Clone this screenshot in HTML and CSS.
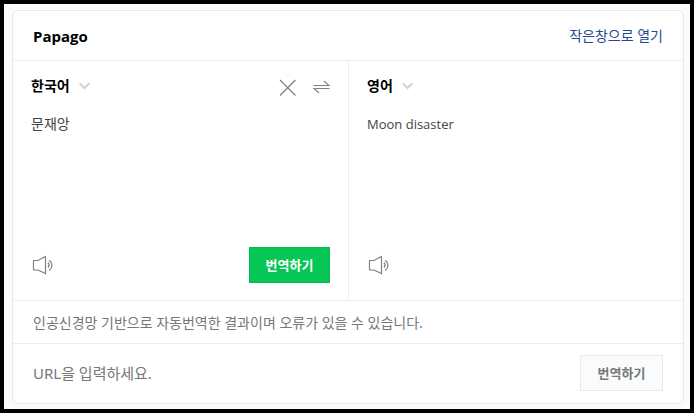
FILE: index.html
```
<!DOCTYPE html>
<html lang="ko">
<head>
  <meta charset="utf-8">
  <meta name="viewport" content="width=device-width, initial-scale=1">
  <title>Papago</title>
  <link rel="stylesheet" href="styles.css">
</head>
<body>
  <main class="translator">
    <header class="header">
      <h1>Papago</h1>
      <a href="#popup" class="popup-link">작은창으로 열기</a>
    </header>

    <div class="panes">
      <section class="pane">
        <div class="pane-top">
          <div class="language">
            <select aria-label="입력 언어">
              <option>한국어</option>
            </select>
            <svg class="chevron" width="11" height="8" viewBox="0 0 11 8" fill="none" stroke="currentColor" stroke-width="2">
              <path d="M0.7 1.2L5.5 6L10.3 1.2"/>
            </svg>
          </div>
          <div class="tools">
            <button type="button" class="icon-button" aria-label="지우기">
              <svg width="18" height="18" viewBox="0 0 18 18" fill="none" stroke="currentColor" stroke-width="1.2">
                <path d="M2 1L17.5 16.5M17.5 1L2 16.5"/>
              </svg>
            </button>
            <button type="button" class="icon-button" aria-label="언어 바꾸기">
              <svg width="18" height="18" viewBox="0 0 18 18" fill="none" stroke="currentColor" stroke-width="1.1">
                <path d="M1.5 6.5H17L12 2M17.5 9.5H2L7 14"/>
              </svg>
            </button>
          </div>
        </div>
        <textarea class="text" aria-label="번역할 내용" spellcheck="false">문재앙</textarea>
        <div class="pane-bottom">
          <button type="button" class="icon-button" aria-label="원문 듣기">
            <svg width="24" height="20" viewBox="0 0 24 20" fill="none" stroke="currentColor" stroke-width="1.2">
              <path d="M2.5 5.5H7L14.5 1.5V18.5L7 15H2.5Z"/>
              <path d="M17 7.5Q19.2 10 17 12.5M18.2 5.2Q24 10 18.2 15.5"/>
            </svg>
          </button>
          <button type="button" class="button button-green">번역하기</button>
        </div>
      </section>

      <section class="pane">
        <div class="pane-top">
          <div class="language">
            <select aria-label="번역 언어">
              <option>영어</option>
            </select>
            <svg class="chevron" width="11" height="8" viewBox="0 0 11 8" fill="none" stroke="currentColor" stroke-width="2">
              <path d="M0.7 1.2L5.5 6L10.3 1.2"/>
            </svg>
          </div>
        </div>
        <p class="text text-result">Moon disaster</p>
        <div class="pane-bottom">
          <button type="button" class="icon-button" aria-label="번역 듣기">
            <svg width="24" height="20" viewBox="0 0 24 20" fill="none" stroke="currentColor" stroke-width="1.2">
              <path d="M2.5 5.5H7L14.5 1.5V18.5L7 15H2.5Z"/>
              <path d="M17 7.5Q19.2 10 17 12.5M18.2 5.2Q24 10 18.2 15.5"/>
            </svg>
          </button>
        </div>
      </section>
    </div>

    <p class="notice">인공신경망 기반으로 자동번역한 결과이며 오류가 있을 수 있습니다.</p>

    <form class="url-form">
      <input type="text" placeholder="URL을 입력하세요." aria-label="URL">
      <button type="button" class="button button-gray">번역하기</button>
    </form>
  </main>
</body>
</html>
```
FILE: styles.css
```
* {
  margin: 0;
  padding: 0;
  box-sizing: border-box;
}

body {
  min-height: 100vh;
  padding: 6px 6px 5px 8px;
  border: 4px solid #000;
  background: #fafbfc;
  color: #444;
  font-family: "Noto Sans", "Noto Sans CJK KR", sans-serif;
  font-size: 14px;
  line-height: 20px;
}

button,
input,
select,
textarea {
  border: none;
  background: none;
  color: inherit;
  font: inherit;
}

.translator {
  border: 1px solid #e6eaec;
  border-radius: 6px;
  background: #fff;
}

.header {
  display: flex;
  justify-content: space-between;
  align-items: center;
  height: 50px;
  padding: 0 20px;
  border-bottom: 1px solid #ebedee;
}

.header h1 {
  color: #000;
  font-family: "Open Sans", sans-serif;
  font-size: 15px;
  font-weight: 700;
}

.popup-link {
  color: #1e4a94;
  text-decoration: none;
}

.panes {
  display: grid;
  grid-template-columns: 1fr 1fr;
  min-height: 240px;
  border-bottom: 1px solid #ebedee;
}

.pane {
  display: flex;
  flex-direction: column;
  padding: 13px 18px 17px;
}

.pane + .pane {
  border-left: 1px solid #ededed;
}

.pane-top,
.pane-bottom {
  display: flex;
  justify-content: space-between;
  align-items: center;
}

.pane-top {
  height: 24px;
}

.pane-bottom {
  height: 36px;
}

.language {
  display: flex;
  align-items: center;
  gap: 9px;
}

.language select {
  appearance: none;
  color: #000;
  font-weight: 700;
}

.chevron {
  color: #d2d2d2;
}

.tools {
  display: flex;
  gap: 16px;
  padding-top: 4px;
}

.icon-button {
  display: flex;
  color: #808080;
  cursor: pointer;
}

.text {
  display: block;
  flex: 1;
  margin-top: 16px;
  resize: none;
  outline: none;
}

.text-result {
  font-family: "Open Sans", "Noto Sans CJK KR", sans-serif;
  font-size: 13px;
}

.button {
  height: 36px;
  font-size: 13px;
  font-weight: 700;
  cursor: pointer;
}

.button-green {
  width: 81px;
  border: 1px solid #08ba55;
  background: #06c755;
  color: #fff;
}

.button-gray {
  width: 83px;
  border: 1px solid #e8ebec;
  background: #fafbfc;
  color: #777;
}

.notice {
  padding: 12px 20px 10px;
  border-bottom: 1px solid #ebedee;
  color: #777;
}

.url-form {
  display: flex;
  align-items: center;
  padding: 11px 20px 12px;
}

.url-form input {
  flex: 1;
  min-width: 0;
  font-size: 15px;
  outline: none;
}

.url-form input::placeholder {
  color: #777;
}
```
